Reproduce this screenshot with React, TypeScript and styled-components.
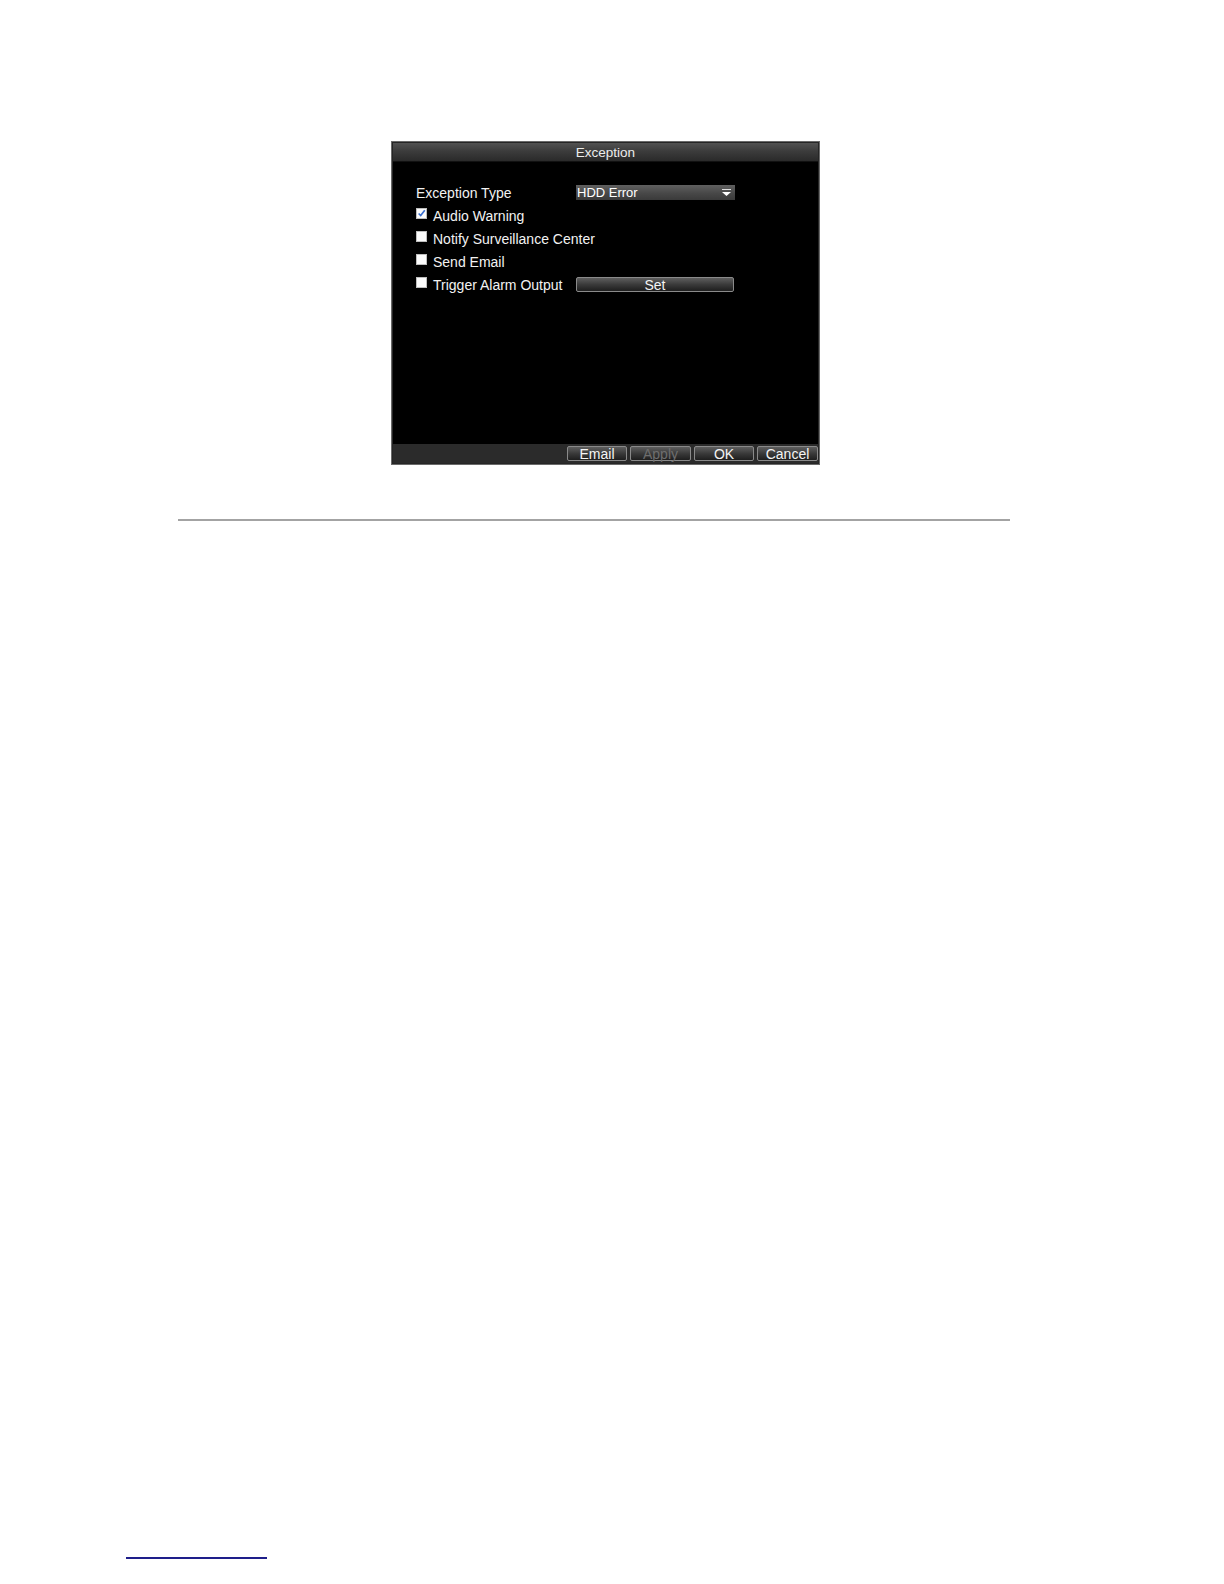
import React from "react";
import styled, { createGlobalStyle } from "styled-components";

const Global = createGlobalStyle`
  html, body { margin: 0; padding: 0; background: #ffffff; width: 1224px; height: 1584px; overflow: hidden; }
  #root { width: 1224px; height: 1584px; overflow: hidden; }
  body { font-family: "Liberation Sans", Arial, sans-serif; }
`;

const Page = styled.div`
  width: 1224px;
  height: 1584px;
  overflow: hidden;
  box-sizing: border-box;
  padding-top: 141px;
  display: flex;
  flex-direction: column;
`;

const Frame = styled.div`
  margin-left: 391px;
  width: 429px;
  height: 324px;
  box-sizing: border-box;
  border: 1px solid #6a6a6a;
  box-shadow: inset 0 0 0 1px #262626;
  background: #000;
  display: flex;
  flex-direction: column;
  padding: 1px;
  color: #f2f2f2;
  font-size: 14px;
`;

const TitleBar = styled.div`
  height: 18px;
  line-height: 19px;
  font-size: 13.5px;
  text-align: center;
  background: linear-gradient(#525252 0%, #3c3c3c 45%, #2a2a2a 100%);
  border-bottom: 1px solid #111;
  color: #ececec;
`;

const Body = styled.div`
  flex: 1;
  background: #000;
  padding: 19px 0 0 23px;
  display: flex;
  flex-direction: column;
`;

const Row = styled.div`
  height: 23px;
  display: flex;
  align-items: center;
`;

const Label = styled.div`
  width: 160px;
  display: flex;
  align-items: center;
  gap: 6px;
  white-space: nowrap;
`;

const Box = styled.span`
  width: 11px;
  height: 11px;
  box-sizing: border-box;
  background: #fbfbfb;
  border: 1px solid #bdbdbd;
  margin-top: -4px;
  display: inline-flex;
  align-items: center;
  justify-content: center;
  flex: none;
`;

const Select = styled.div`
  width: 159px;
  height: 15px;
  box-sizing: border-box;
  background: linear-gradient(#606060 0%, #484848 55%, #3a3a3a 100%);
  display: flex;
  align-items: center;
  justify-content: space-between;
  padding: 0 4px 0 1px;
  font-size: 13px;
  color: #fff;
`;

const Btn = styled.div<{ $w: number; $disabled?: boolean }>`
  width: ${(p) => p.$w}px;
  height: 15px;
  box-sizing: border-box;
  border: 1px solid #8a8a8a;
  border-radius: 2px;
  background: linear-gradient(#5e5e5e 0%, #3a3a3a 50%, #1e1e1e 100%);
  color: ${(p) => (p.$disabled ? "#6e6e6e" : "#f4f4f4")};
  font-size: 14px;
  line-height: 14px;
  text-align: center;
`;

const Footer = styled.div`
  height: 19px;
  background: #2b2b2b;
  display: flex;
  justify-content: flex-end;
  align-items: center;
  gap: 3px;
`;

const Rule = styled.div`
  margin-top: 54px;
  margin-left: 178px;
  width: 832px;
  height: 2px;
  background: #a3a3a3;
`;

const FootLine = styled.div`
  margin-top: 1036px;
  margin-left: 126px;
  width: 141px;
  height: 2px;
  background: #1e1e8a;
`;

const Check = () => (
  <svg width="11" height="11" viewBox="0 0 11 11">
    <path d="M2 5.5 L4.5 8 L9.5 1.5" fill="none" stroke="#3a6fd0" strokeWidth="2" />
  </svg>
);

const Arrow = () => (
  <svg width="9" height="9" viewBox="0 0 9 9">
    <rect x="0" y="1" width="9" height="1" fill="#ddd" />
    <path d="M0 4 L9 4 L4.5 8 Z" fill="#fff" />
  </svg>
);

const CheckRow = ({ text, checked, children }: { text: string; checked?: boolean; children?: React.ReactNode }) => (
  <Row>
    <Label>
      <Box>{checked && <Check />}</Box>
      {text}
    </Label>
    {children}
  </Row>
);

export default function App() {
  return (
    <>
      <Global />
      <Page>
        <Frame>
          <TitleBar>Exception</TitleBar>
          <Body>
            <Row>
              <Label>Exception Type</Label>
              <Select>
                HDD Error
                <Arrow />
              </Select>
            </Row>
            <CheckRow text="Audio Warning" checked />
            <CheckRow text="Notify Surveillance Center" />
            <CheckRow text="Send Email" />
            <CheckRow text="Trigger Alarm Output">
              <Btn $w={158}>Set</Btn>
            </CheckRow>
          </Body>
          <Footer>
            <Btn $w={60}>Email</Btn>
            <Btn $w={61} $disabled>Apply</Btn>
            <Btn $w={60}>OK</Btn>
            <Btn $w={61}>Cancel</Btn>
          </Footer>
        </Frame>
        <Rule />
        <FootLine />
      </Page>
    </>
  );
}
